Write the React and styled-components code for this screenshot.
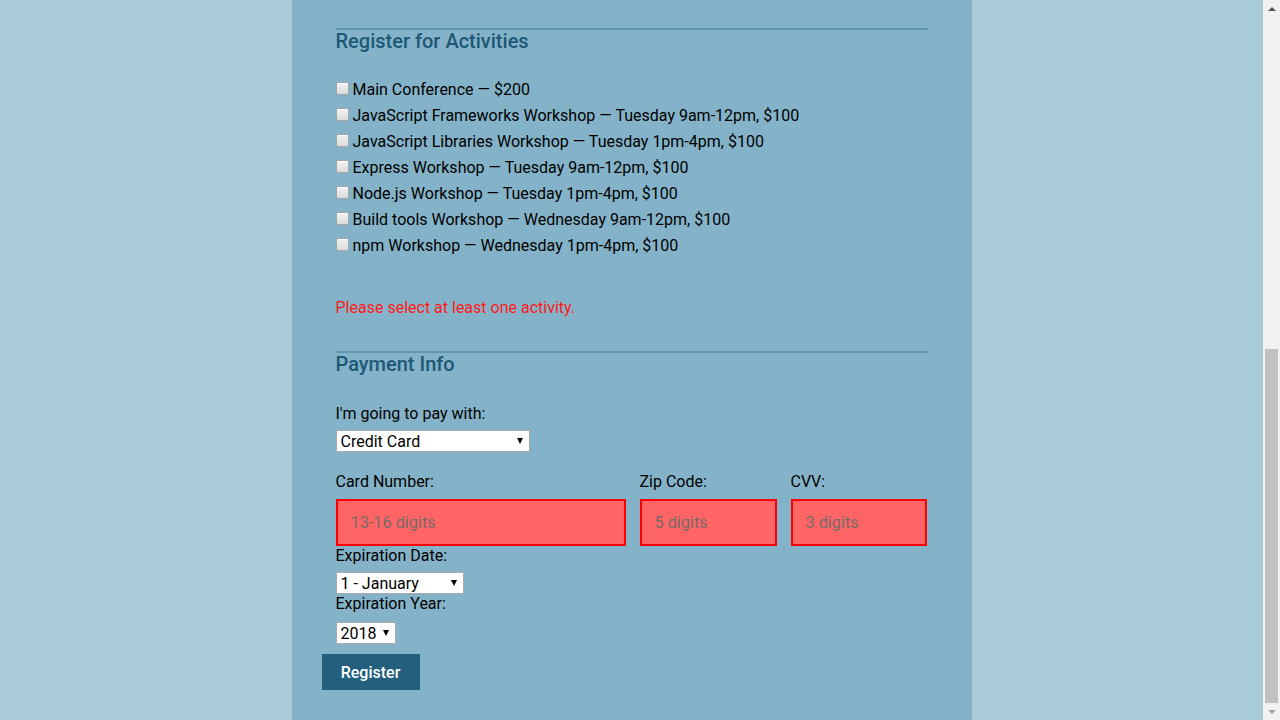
import React from "react";
import styled, { createGlobalStyle } from "styled-components";

const GlobalStyle = createGlobalStyle`
  html, body { margin: 0; padding: 0; height: 100%; overflow: hidden; }
  body {
    background: #a9cbd8;
    font-family: Roboto, "Noto Sans", "Liberation Sans", sans-serif;
    font-size: 16px;
    color: #000;
  }
  #root { height: 100%; }
`;

const Page = styled.div`
  display: flex;
  height: 720px;
  overflow: hidden;
`;

const Viewport = styled.div`
  flex: 1;
  display: flex;
  justify-content: center;
`;

const Panel = styled.form`
  width: 680px;
  box-sizing: border-box;
  background: #84b3c9;
  padding: 28px 30px 0;
`;

const Fieldset = styled.section`
  border-top: 2px solid #5f98b2;
  margin: 0 14px;
  padding: 0;
`;

const Legend = styled.h2`
  margin: 0;
  font-size: 20px;
  line-height: 22px;
  font-weight: 500;
  color: #1d5876;
`;

const ActivityList = styled.div`
  margin-top: 25px;
  display: flex;
  flex-direction: column;
`;

const ActivityRow = styled.label`
  display: flex;
  align-items: center;
  height: 26px;
  line-height: 26px;
`;

const Checkbox = styled.input.attrs({ type: "checkbox" })`
  appearance: none;
  -webkit-appearance: none;
  box-sizing: border-box;
  width: 13px;
  height: 13px;
  margin: -4px 4px 0 0;
  border: 1px solid #a6a6a6;
  border-radius: 2px;
  background: linear-gradient(#f2f2f2, #dcdcdc);
  box-shadow: inset 0 1px 0 #fff;
`;

const ErrorMsg = styled.p`
  margin: 39px 0 34px;
  line-height: 19px;
  color: #ff1a1a;
`;

const FieldLabel = styled.label`
  display: block;
  line-height: 19px;
  margin-top: ${(p) => p.$top || 0}px;
`;

const SelectWrap = styled.div`
  position: relative;
  width: ${(p) => p.$w}px;
  margin-top: ${(p) => p.$top || 0}px;
`;

const Select = styled.select`
  appearance: none;
  -webkit-appearance: none;
  box-sizing: border-box;
  display: block;
  width: 100%;
  height: 22px;
  margin: 0;
  padding: 1px 4px 0;
  border: 1px solid #a9a9a9;
  border-radius: 0;
  background: #fff;
  font-family: Roboto, "Noto Sans", sans-serif;
  font-size: 16px;
  line-height: 20px;
  color: #000;
`;

const Arrow = styled.span`
  position: absolute;
  right: 7px;
  top: 8px;
  width: 0;
  height: 0;
  border-left: 3.5px solid transparent;
  border-right: 3.5px solid transparent;
  border-top: 6px solid #000;
  pointer-events: none;
`;

const CardGrid = styled.div`
  display: grid;
  grid-template-columns: 290px 137px 136px;
  column-gap: 14px;
  margin-top: 20px;
`;

const Field = styled.div`
  display: flex;
  flex-direction: column;
`;

const TextInput = styled.input`
  box-sizing: border-box;
  height: 47px;
  margin-top: 8px;
  padding: 0 13px;
  border: 2px solid #ff0000;
  background: #ff6565;
  font-family: Roboto, "Noto Sans", sans-serif;
  font-size: 16.3px;
  color: #000;
  outline: none;
  &::placeholder { color: #786a6a; }
`;

const Button = styled.button`
  display: block;
  margin-top: 10px;
  width: 98px;
  height: 36px;
  border: 0;
  background: #22607e;
  color: #fff;
  font-family: Roboto, "Noto Sans", sans-serif;
  font-size: 16px;
  font-weight: 500;
  padding: 0;
`;

const Scrollbar = styled.div`
  width: 17px;
  background: #f1f1f1;
  display: flex;
  flex-direction: column;
`;

const ScrollArrow = styled.div`
  height: 17px;
  display: flex;
  align-items: center;
  justify-content: center;
  &::before {
    content: "";
    width: 0;
    height: 0;
    border-left: 4px solid transparent;
    border-right: 4px solid transparent;
    ${(p) =>
      p.$down
        ? "border-top: 4px solid #a3a3a3;"
        : "border-bottom: 4px solid #505050;"}
  }
`;

const Track = styled.div`
  flex: 1;
  display: flex;
  flex-direction: column;
  justify-content: flex-end;
`;

const Thumb = styled.div`
  height: 354px;
  margin: 0 2px;
  background: #c1c1c1;
`;

const activities = [
  "Main Conference \u2014 $200",
  "JavaScript Frameworks Workshop \u2014 Tuesday 9am-12pm, $100",
  "JavaScript Libraries Workshop \u2014 Tuesday 1pm-4pm, $100",
  "Express Workshop \u2014 Tuesday 9am-12pm, $100",
  "Node.js Workshop \u2014 Tuesday 1pm-4pm, $100",
  "Build tools Workshop \u2014 Wednesday 9am-12pm, $100",
  "npm Workshop \u2014 Wednesday 1pm-4pm, $100",
];

export default function App() {
  return (
    <>
      <GlobalStyle />
      <Page>
        <Viewport>
          <Panel onSubmit={(e) => e.preventDefault()}>
            <Fieldset>
              <Legend>Register for Activities</Legend>
              <ActivityList>
                {activities.map((a) => (
                  <ActivityRow key={a}>
                    <Checkbox />
                    {a}
                  </ActivityRow>
                ))}
              </ActivityList>
              <ErrorMsg>Please select at least one activity.</ErrorMsg>
            </Fieldset>
            <Fieldset>
              <Legend>Payment Info</Legend>
              <FieldLabel $top={29}>I'm going to pay with:</FieldLabel>
              <SelectWrap $w={194} $top={7}>
                <Select defaultValue="credit">
                  <option value="credit">Credit Card</option>
                  <option value="paypal">PayPal</option>
                  <option value="bitcoin">Bitcoin</option>
                </Select>
                <Arrow />
              </SelectWrap>
              <CardGrid>
                <Field>
                  <FieldLabel>Card Number:</FieldLabel>
                  <TextInput placeholder="13-16 digits" />
                </Field>
                <Field>
                  <FieldLabel>Zip Code:</FieldLabel>
                  <TextInput placeholder="5 digits" />
                </Field>
                <Field>
                  <FieldLabel>CVV:</FieldLabel>
                  <TextInput placeholder="3 digits" />
                </Field>
              </CardGrid>
              <FieldLabel>Expiration Date:</FieldLabel>
              <SelectWrap $w={128} $top={7}>
                <Select defaultValue="1">
                  <option value="1">1 - January</option>
                  <option value="2">2 - February</option>
                </Select>
                <Arrow />
              </SelectWrap>
              <FieldLabel>Expiration Year:</FieldLabel>
              <SelectWrap $w={60} $top={9}>
                <Select defaultValue="2018">
                  <option value="2018">2018</option>
                  <option value="2019">2019</option>
                </Select>
                <Arrow />
              </SelectWrap>
            </Fieldset>
            <Button type="submit">Register</Button>
          </Panel>
        </Viewport>
        <Scrollbar>
          <ScrollArrow />
          <Track>
            <Thumb />
          </Track>
          <ScrollArrow $down />
        </Scrollbar>
      </Page>
    </>
  );
}
